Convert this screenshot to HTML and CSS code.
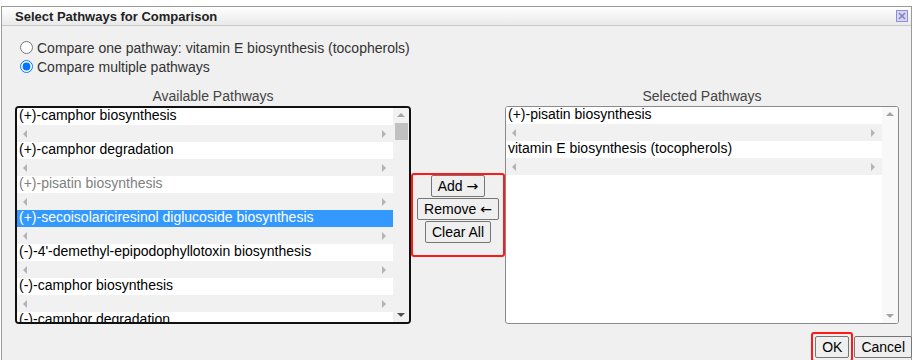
FILE: index.html
```html
<!DOCTYPE html>
<html>
<head>
<meta charset="utf-8">
<link rel="stylesheet" href="styles.css">
</head>
<body>
<div class="dialog">
  <div class="titlebar">
    <span class="title">Select Pathways for Comparison</span>
    <span class="close"><svg width="12" height="12" viewBox="0 0 12 12"><rect x="0.5" y="0.5" width="11" height="11" fill="#d6d6f4" stroke="#8f8fd6"/><path d="M3 3 L9 9 M9 3 L3 9" stroke="#8080c8" stroke-width="1.6"/></svg></span>
  </div>
  <div class="content">
    <div class="radios">
      <label class="radio"><input type="radio" name="mode"> Compare one pathway: vitamin E biosynthesis (tocopherols)</label>
      <label class="radio"><input type="radio" name="mode" checked> Compare multiple pathways</label>
    </div>
    <div class="panes">
      <div class="pane pane-left">
        <div class="pane-label">Available Pathways</div>
        <div class="list list-focus">
          <div class="rows">
            <div class="opt">(+)-camphor biosynthesis</div>
            <div class="hbar"><span class="al"></span><span class="ar"></span></div>
            <div class="opt">(+)-camphor degradation</div>
            <div class="hbar"><span class="al"></span><span class="ar"></span></div>
            <div class="opt opt-disabled">(+)-pisatin biosynthesis</div>
            <div class="hbar"><span class="al"></span><span class="ar"></span></div>
            <div class="opt opt-selected">(+)-secoisolariciresinol diglucoside biosynthesis</div>
            <div class="hbar"><span class="al"></span><span class="ar"></span></div>
            <div class="opt">(-)-4'-demethyl-epipodophyllotoxin biosynthesis</div>
            <div class="hbar"><span class="al"></span><span class="ar"></span></div>
            <div class="opt">(-)-camphor biosynthesis</div>
            <div class="hbar"><span class="al"></span><span class="ar"></span></div>
            <div class="opt">(-)-camphor degradation</div>
            <div class="hbar"><span class="al"></span><span class="ar"></span></div>
          </div>
          <div class="vscroll">
            <span class="au au-light"></span>
            <span class="thumb"></span>
            <span class="vspace"></span>
            <span class="ad"></span>
          </div>
        </div>
      </div>
      <div class="middle">
        <div class="actions">
          <button class="btn">Add <span class="arrow">&#8594;</span></button>
          <button class="btn">Remove <span class="arrow">&#8592;</span></button>
          <button class="btn">Clear All</button>
        </div>
      </div>
      <div class="pane pane-right">
        <div class="pane-label">Selected Pathways</div>
        <div class="list list-plain">
          <div class="rows rows-white">
            <div class="opt">(+)-pisatin biosynthesis</div>
            <div class="hbar"><span class="al"></span><span class="ar"></span></div>
            <div class="opt">vitamin E biosynthesis (tocopherols)</div>
            <div class="hbar"><span class="al"></span><span class="ar"></span></div>
          </div>
          <div class="vscroll vscroll-plain">
            <span class="au au-light"></span>
            <span class="vspace"></span>
            <span class="ad ad-light"></span>
          </div>
        </div>
      </div>
    </div>
    <div class="footer">
      <span class="ok-wrap"><button class="btn btn-foot">OK</button></span>
      <button class="btn btn-foot">Cancel</button>
    </div>
  </div>
</div>
</body>
</html>
```

FILE: styles.css
```css
html, body {
  margin: 0;
  padding: 0;
  background: #ffffff;
  font-family: "Liberation Sans", Arial, sans-serif;
}

.dialog {
  margin: 6px 0 0 1px;
  width: 911px;
  height: 400px;
  border: 1px solid #9a9a9a;
  background: #f0f0f0;
  box-sizing: border-box;
}

.titlebar {
  height: 18px;
  background: linear-gradient(#ffffff, #e9e9e9);
  border-bottom: 1px solid #c8c8c8;
  display: flex;
  align-items: center;
  justify-content: space-between;
  padding: 0 3px 0 13px;
}

.title {
  font-weight: bold;
  font-size: 13px;
  color: #222;
}

.close {
  display: flex;
  width: 12px;
  height: 12px;
}

.content {
  padding: 12px 0 0 13px;
}

.radios {
  display: flex;
  flex-direction: column;
}

.radio {
  display: flex;
  align-items: center;
  height: 19px;
  font-size: 14px;
  color: #333;
}

.radio input {
  width: 13px;
  height: 13px;
  margin: 0 4px 0 5px;
  accent-color: #0075ff;
}

.panes {
  display: flex;
  margin-top: 12px;
}

.pane {
  display: flex;
  flex-direction: column;
}

.pane-left {
  width: 396px;
}

.pane-right {
  width: 394px;
}

.pane-label {
  text-align: center;
  font-size: 14px;
  color: #444;
  height: 18px;
  line-height: 17px;
}

.list {
  height: 218px;
  display: flex;
  background: #fff;
  box-sizing: border-box;
  overflow: hidden;
}

.list-focus {
  border: 2px solid #101010;
  border-radius: 4px;
}

.list-plain {
  border: 1px solid #8a8a8a;
  border-radius: 3px;
}

.rows {
  width: 376px;
  overflow: hidden;
  display: flex;
  flex-direction: column;
}

.opt {
  flex: none;
  height: 17px;
  line-height: 14px;
  padding-left: 2px;
  font-size: 14px;
  color: #000;
  background: #fff;
  white-space: nowrap;
  box-sizing: border-box;
}

.opt-disabled {
  color: #808080;
}

.opt-selected {
  background: #3399ff;
  color: #fff;
}

.hbar {
  flex: none;
  height: 17px;
  background: #f1f1f1;
  display: flex;
  align-items: center;
  justify-content: space-between;
  padding: 0 7px 0 6px;
}

.al {
  width: 0;
  height: 0;
  border-top: 4px solid transparent;
  border-bottom: 4px solid transparent;
  border-right: 4px solid #b4b4b4;
}

.ar {
  width: 0;
  height: 0;
  border-top: 4px solid transparent;
  border-bottom: 4px solid transparent;
  border-left: 4px solid #b4b4b4;
}

.vscroll {
  width: 16px;
  background: #f1f1f1;
  display: flex;
  flex-direction: column;
  align-items: center;
}

.vscroll-plain {
  background: #f8f8f8;
}

.au {
  margin-top: 5px;
  width: 0;
  height: 0;
  border-left: 4px solid transparent;
  border-right: 4px solid transparent;
  border-bottom: 4px solid #505050;
}

.au-light {
  border-bottom-color: #a3a3a3;
}

.thumb {
  margin-top: 6px;
  width: 13px;
  height: 17px;
  background: #c1c1c1;
}

.vspace {
  flex: 1;
}

.ad {
  margin-bottom: 5px;
  width: 0;
  height: 0;
  border-left: 4px solid transparent;
  border-right: 4px solid transparent;
  border-top: 4px solid #505050;
}

.ad-light {
  border-top-color: #a3a3a3;
}

.middle {
  width: 94px;
  display: flex;
  align-items: center;
  padding-top: 18px;
}

.actions {
  width: 94px;
  height: 84px;
  box-sizing: border-box;
  border: 2px solid #ff1a1a;
  border-radius: 3px;
  display: flex;
  flex-direction: column;
  align-items: center;
  padding-top: 0;
}

.btn {
  font-family: "Liberation Sans", Arial, sans-serif;
  font-size: 14px;
  color: #000;
  background: #efefef;
  border: 1px solid #767676;
  border-radius: 2px;
  height: 22px;
  padding: 0 6px;
  margin: 0 0 1px 0;
  line-height: 18px;
}

.arrow {
  font-family: "DejaVu Sans", sans-serif;
  font-size: 14px;
}

.footer {
  display: flex;
  justify-content: flex-end;
  align-items: flex-start;
  margin-top: 8px;
  padding-right: 0;
  width: 897px;
}

.ok-wrap {
  border: 2px solid #ff1a1a;
  border-radius: 3px;
  padding: 2px 2px 0 2px;
  height: 30px;
  box-sizing: border-box;
  margin-right: 1px;
}

.btn-foot {
  margin-top: 4px;
}

.ok-wrap .btn-foot {
  margin: 0;
}
```
